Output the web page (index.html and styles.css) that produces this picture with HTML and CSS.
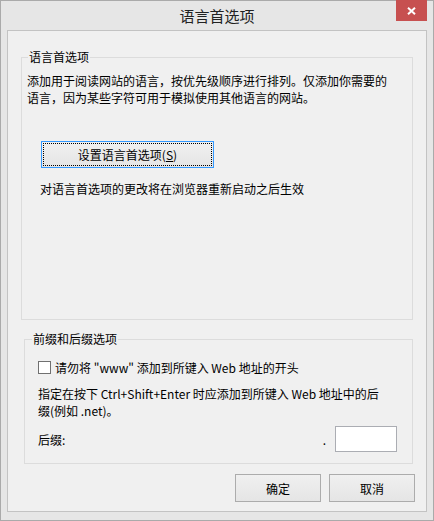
FILE: index.html
```html
<!DOCTYPE html>
<html lang="zh-CN">
<head>
<meta charset="utf-8">
<title>语言首选项</title>
<link rel="stylesheet" href="styles.css">
</head>
<body>
<div class="window">
  <div class="titlebar">
    <span class="title">语言首选项</span>
    <span class="close"><svg width="9" height="8" viewBox="0 0 9 8"><path d="M1 0.8 L8 7.2 M8 0.8 L1 7.2" stroke="#fff" stroke-width="2" fill="none"/></svg></span>
  </div>
  <div class="client">
    <fieldset class="group group-lang">
      <legend>语言首选项</legend>
      <p class="desc">添加用于阅读网站的语言，按优先级顺序进行排列。仅添加你需要的语言，因为某些字符可用于模拟使用其他语言的网站。</p>
      <button class="btn btn-focus btn-setlang">设置语言首选项(<u>S</u>)</button>
      <p class="note">对语言首选项的更改将在浏览器重新启动之后生效</p>
    </fieldset>
    <fieldset class="group group-suffix">
      <legend>前缀和后缀选项</legend>
      <label class="check"><input type="checkbox">请勿将 "www" 添加到所键入 Web 地址的开头</label>
      <p class="desc2">指定在按下 Ctrl+Shift+Enter 时应添加到所键入 Web 地址中的后缀(例如 .net)。</p>
      <div class="suffix-row">
        <span class="suffix-label">后缀:</span>
        <span class="dot">.</span>
        <input class="suffix-input" type="text">
      </div>
    </fieldset>
    <div class="actions">
      <button class="btn">确定</button>
      <button class="btn">取消</button>
    </div>
  </div>
</div>
</body>
</html>
```
FILE: styles.css
```css
html, body {
  margin: 0;
  padding: 0;
}
body {
  font-family: "Noto Sans CJK SC", "Microsoft YaHei", sans-serif;
  font-size: 12px;
  color: #000;
  background: #ffffff;
}
.window {
  position: relative;
  width: 434px;
  height: 521px;
  box-sizing: border-box;
  border: 1px solid #aaaaaa;
  background: #e6e6e6;
  padding: 0 6px 8px;
  display: flex;
  flex-direction: column;
}
.titlebar {
  height: 29px;
  flex: none;
  display: flex;
  align-items: center;
  justify-content: center;
}
.title {
  font-size: 15px;
  line-height: 20px;
  color: #222;
}
.close {
  position: absolute;
  top: -1px;
  right: 6px;
  width: 31px;
  height: 21px;
  background: #c75050;
  display: flex;
  align-items: center;
  justify-content: center;
}
.close svg {
  display: block;
}
.client {
  flex: 1;
  border: 1px solid #c3c3c3;
  background: #f0f0f0;
  display: flex;
  flex-direction: column;
  min-height: 0;
}
.group {
  border: 1px solid #dcdcdc;
  min-width: 0;
}
.group legend {
  padding: 0 1px;
  line-height: 16px;
}
.group-lang {
  flex: 1;
  margin: 18px 13px 0 13px;
  padding: 0 5px;
}
.group-lang legend {
  margin-left: 1px;
}
.group-suffix {
  flex: none;
  margin: 11px 13px 0 16px;
  padding: 0 13px 11px;
}
.group-suffix legend {
  margin-left: -6px;
}
.desc {
  margin: 7px 0 0;
  line-height: 17px;
  width: 364px;
}
.note {
  margin: 12px 0 0 13px;
  line-height: 17px;
}
.btn {
  font: inherit;
  font-size: 12px;
  color: #000;
  border: 1px solid #acacac;
  background: linear-gradient(#f0f0f0, #e5e5e5);
  padding: 0;
  margin: 0;
  position: relative;
  box-sizing: border-box;
}
.btn-focus {
  border-color: #3399ff;
}
.btn-focus::after {
  content: "";
  position: absolute;
  top: 1px;
  left: 1px;
  right: 1px;
  bottom: 1px;
  border: 1px dotted #000;
}
.btn-setlang {
  display: block;
  width: 173px;
  height: 27px;
  margin: 35px 0 0 14px;
}
.check {
  display: flex;
  align-items: center;
  margin-top: 12px;
  line-height: 17px;
}
.check input {
  appearance: none;
  -webkit-appearance: none;
  width: 13px;
  height: 13px;
  box-sizing: border-box;
  margin: 0 4px 0 0;
  border: 1px solid #707070;
  background: #fff;
}
.desc2 {
  margin: 9px 0 0;
  line-height: 17px;
  width: 352px;
}
.suffix-row {
  display: flex;
  align-items: center;
  margin-top: 7px;
  line-height: 17px;
}
.suffix-label {
  flex: 1;
}
.dot {
  margin-right: 9px;
}
.suffix-input {
  width: 62px;
  height: 26px;
  box-sizing: border-box;
  border: 1px solid #abadb3;
  background: #fff;
  margin: 0 2px 0 0;
  padding: 0;
}
.actions {
  flex: none;
  display: flex;
  justify-content: flex-end;
  gap: 8px;
  margin: 10px 11px 9px 0;
}
.actions .btn {
  width: 86px;
  height: 28px;
}
```
